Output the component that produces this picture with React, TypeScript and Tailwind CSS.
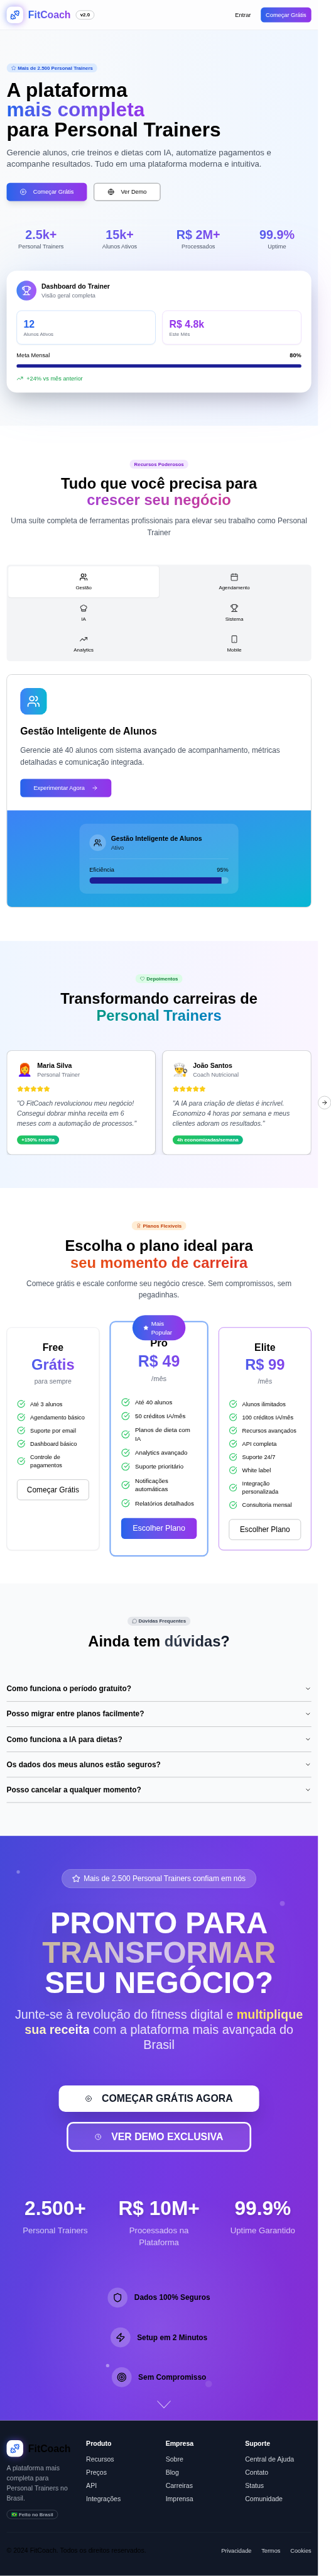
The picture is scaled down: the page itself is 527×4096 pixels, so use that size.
import React from "react";
import {
  ArrowRight,
  Award,
  Calendar,
  ChefHat,
  ChevronDown,
  CirclePlay,
  CircleCheckBig,
  Clock,
  Dumbbell,
  Globe,
  Heart,
  MessageCircle,
  Shield,
  Smartphone,
  Star,
  Target,
  TrendingUp,
  Trophy,
  Users,
  Zap,
} from "lucide-react";

const brand = "bg-gradient-to-r from-[#2563eb] to-[#9333ea]";
const brandText = brand + " bg-clip-text text-transparent";

function Badge({ className, children }: { className: string; children: React.ReactNode }) {
  return (
    <span
      className={
        "inline-flex h-[22px] items-center whitespace-nowrap rounded-full border px-2.5 text-xs font-semibold " +
        className
      }
    >
      {children}
    </span>
  );
}

function Logo({ textClass, children }: { textClass: string; children?: React.ReactNode }) {
  return (
    <div className="flex h-10 items-center gap-3">
      <div className="relative size-10 shrink-0">
        <div className={"absolute inset-0 rounded-xl opacity-60 blur-[8px] " + brand} />
        <div className="relative flex size-10 items-center justify-center rounded-xl bg-white">
          <Dumbbell className="size-6 text-[#2563eb]" />
        </div>
      </div>
      <span className={"text-2xl font-bold " + textClass}>FitCoach</span>
      {children}
    </div>
  );
}

function Header() {
  return (
    <header className="flex h-[73px] items-center justify-between border-b border-[#e0e4ea] bg-[#fdfdfe] px-4">
      <Logo textClass={brandText}>
        <Badge className="border-[#b0b2b5] bg-white text-black">v2.0</Badge>
      </Logo>
      <div className="flex items-center gap-3 text-sm">
        <span className="px-3">Entrar</span>
        <span className={"flex h-9 items-center whitespace-nowrap rounded-lg px-3 text-white " + brand}>Começar Grátis</span>
      </div>
    </header>
  );
}

const heroStats = [
  ["2.5k+", "Personal Trainers"],
  ["15k+", "Alunos Ativos"],
  ["R$ 2M+", "Processados"],
  ["99.9%", "Uptime"],
];

function Hero() {
  return (
    <section className="relative z-10 h-[954px] bg-gradient-to-r from-[#f9fafb] to-[#eff6ff] px-4 pt-20">
      <div className="flex">
        <Badge className="border-transparent bg-[#dbeafe] text-[#1d4ed8]">
          <Star className="mr-1 size-3" strokeWidth={1.5} />
          Mais de 2.500 Personal Trainers
        </Badge>
      </div>
      <h1 className="mt-[18px] whitespace-nowrap text-5xl font-bold leading-[48px]">
        A plataforma
        <br />
        <span className={brandText}>mais completa</span>
        <br />
        para Personal Trainers
      </h1>
      <p className="mt-4 whitespace-nowrap text-xl text-[#4b5563]">
        Gerencie alunos, crie treinos e dietas com IA, automatize pagamentos e
        <br />
        acompanhe resultados. Tudo em uma plataforma moderna e intuitiva.
      </p>
      <div className="mt-8 flex gap-4 text-sm">
        <div className={"flex h-11 items-center gap-4 whitespace-nowrap rounded-lg px-8 text-white shadow-lg " + brand}>
          <CirclePlay className="size-4" />
          Começar Grátis
        </div>
        <div className="flex h-11 items-center gap-4 whitespace-nowrap rounded-lg border-2 border-[#b0b2b4] bg-white px-8">
          <Globe className="size-4" />
          Ver Demo
        </div>
      </div>
      <div className="mt-16 grid grid-cols-4 gap-6 text-center">
        {heroStats.map(([value, label]) => (
          <div key={label}>
            <div className={"text-3xl font-bold " + brandText}>{value}</div>
            <div className="text-sm text-[#4b5563]">{label}</div>
          </div>
        ))}
      </div>
      <div className="relative mt-12">
        <div className="absolute inset-0 rounded-3xl bg-gradient-to-r from-[#60a5fa] to-[#c084fc] opacity-20 blur-[64px]" />
        <DashboardCard />
      </div>
    </section>
  );
}

function DashboardCard() {
  return (
    <div className="relative h-[294px] rounded-3xl bg-white p-6 shadow-2xl">
      <div className="flex items-center gap-3">
        <div className="flex size-12 items-center justify-center rounded-full bg-gradient-to-r from-[#3b82f6] to-[#a855f7]">
          <Trophy className="size-6 text-white" />
        </div>
        <div>
          <div className="font-semibold">Dashboard do Trainer</div>
          <div className="text-sm text-[#6b7280]">Visão geral completa</div>
        </div>
      </div>
      <div className="mt-6 grid grid-cols-2 gap-4">
        <div className="h-[82px] rounded-xl border border-[#bfdbfe] p-4 shadow-xs">
          <div className="text-2xl font-bold text-[#2563eb]">12</div>
          <div className="text-xs text-[#6b7280]">Alunos Ativos</div>
        </div>
        <div className="h-[82px] rounded-xl border border-[#e9d5ff] p-4 shadow-xs">
          <div className="text-2xl font-bold text-[#9333ea]">R$ 4.8k</div>
          <div className="text-xs text-[#6b7280]">Este Mês</div>
        </div>
      </div>
      <div className="mt-4 flex justify-between text-sm">
        <span>Meta Mensal</span>
        <span className="font-semibold">80%</span>
      </div>
      <div className="mt-3 h-2 rounded-full bg-[#1b1e95]" />
      <div className="mt-4 flex items-center gap-2 text-sm text-[#16a34a]">
        <TrendingUp className="size-4" />
        +24% vs mês anterior
      </div>
    </div>
  );
}

const tabs = [
  { label: "Gestão", Icon: Users },
  { label: "Agendamento", Icon: Calendar },
  { label: "IA", Icon: ChefHat },
  { label: "Sistema", Icon: Trophy },
  { label: "Analytics", Icon: TrendingUp },
  { label: "Mobile", Icon: Smartphone },
];

function Features() {
  return (
    <section className="h-[1243px] px-4 pt-[82px] text-center">
      <div className="flex justify-center">
        <Badge className="border-transparent bg-[#f3e8ff] text-[#7e22ce]">Recursos Poderosos</Badge>
      </div>
      <h2 className="mt-4 text-4xl font-bold leading-10">
        Tudo que você precisa para
        <span className="block bg-gradient-to-r from-[#9333ea] to-[#db2777] bg-clip-text text-transparent">
          crescer seu negócio
        </span>
      </h2>
      <p className="mt-4 whitespace-nowrap text-lg leading-7 text-[#4b5563]">
        Uma suíte completa de ferramentas profissionais para elevar seu trabalho como Personal
        <br />
        Trainer
      </p>
      <div className="mt-[63px] grid h-[233px] grid-cols-2 grid-rows-3 rounded-lg bg-[#f3f4f6] p-1">
        {tabs.map(({ label, Icon }, i) => (
          <div
            key={label}
            className={
              "flex flex-col items-center justify-center gap-2 text-xs " +
              (i === 0 ? "rounded-md bg-white shadow-xs" : "")
            }
          >
            <Icon className={i === 0 ? "size-5" : "size-5 text-[#3d3e40]"} />
            {label}
          </div>
        ))}
      </div>
      <div className="mt-8 h-[562px] overflow-hidden rounded-xl border border-[#b0b2b4] text-left">
        <div className="h-[327px] bg-white p-8">
          <div className="flex size-16 items-center justify-center rounded-2xl bg-gradient-to-r from-[#3b82f6] to-[#06b6d4]">
            <Users className="size-8 text-white" />
          </div>
          <h3 className="mt-6 text-2xl font-bold">Gestão Inteligente de Alunos</h3>
          <p className="mt-4 whitespace-nowrap text-lg leading-[29.25px] text-[#4b5563]">
            Gerencie até 40 alunos com sistema avançado de acompanhamento, métricas
            <br />
            detalhadas e comunicação integrada.
          </p>
          <div className={"mt-6 flex h-11 w-[220px] items-center gap-4 whitespace-nowrap rounded-lg px-8 text-sm text-white " + brand}>
            Experimentar Agora
            <ArrowRight className="size-4" />
          </div>
        </div>
        <div className="flex h-[233px] justify-center bg-gradient-to-br from-[#3b82f6] to-[#06b6d4] p-8">
          <div className="h-[169px] w-96 rounded-2xl bg-white/12 p-6">
            <div className="flex items-center gap-3">
              <div className="flex size-10 items-center justify-center rounded-full bg-white/20">
                <Users className="size-5" />
              </div>
              <div>
                <div className="font-semibold">Gestão Inteligente de Alunos</div>
                <div className="text-sm text-black/75">Ativo</div>
              </div>
            </div>
            <div className="mt-4 h-px bg-white/20" />
            <div className="mt-4 flex justify-between text-sm">
              <span>Eficiência</span>
              <span>95%</span>
            </div>
            <div className="mt-2 h-4 overflow-hidden rounded-full bg-white/20">
              <div className="h-4 w-[95%] bg-[#1b1e95]" />
            </div>
          </div>
        </div>
      </div>
    </section>
  );
}

const testimonials = [
  {
    emoji: "👩‍🦰",
    name: "Maria Silva",
    role: "Personal Trainer",
    lines: ['"O FitCoach revolucionou meu negócio!', "Consegui dobrar minha receita em 6", 'meses com a automação de processos."'],
    result: "+150% receita",
  },
  {
    emoji: "👨‍🍳",
    name: "João Santos",
    role: "Coach Nutricional",
    lines: ['"A IA para criação de dietas é incrível.', "Economizo 4 horas por semana e meus", 'clientes adoram os resultados."'],
    result: "4h economizadas/semana",
  },
];

function Testimonials() {
  return (
    <section className="relative h-[596px] bg-gradient-to-r from-[#eff6ff] to-[#faf5ff] px-4 pt-20">
      <div className="flex justify-center">
        <Badge className="border-transparent bg-[#dcfce7] text-[#15803d]">
          <Heart className="mr-1 size-3" strokeWidth={1.5} />
          Depoimentos
        </Badge>
      </div>
      <h2 className="mt-[18px] text-center text-4xl font-bold leading-10">
        Transformando carreiras de
        <span className="block bg-gradient-to-r from-[#16a34a] to-[#2563eb] bg-clip-text text-transparent">
          Personal Trainers
        </span>
      </h2>
      <div className="mt-16 grid grid-cols-2 gap-4 overflow-hidden">
        {testimonials.map((t) => (
          <div key={t.name} className="h-[252px] rounded-xl border border-[#b0b2b4] bg-white p-6 shadow-lg">
            <div className="flex items-center gap-3">
              <div className="w-[37px] whitespace-nowrap text-3xl">{t.emoji}</div>
              <div>
                <div className="font-semibold">{t.name}</div>
                <div className="text-sm text-[#6b7280]">{t.role}</div>
              </div>
            </div>
            <div className="mt-4 flex">
              {[0, 1, 2, 3, 4].map((n) => (
                <Star key={n} className="size-4 fill-[#facc15] text-[#facc15]" />
              ))}
            </div>
            <p className="mt-4 whitespace-nowrap italic text-[#4b5563]">
              {t.lines.map((line) => (
                <span key={line} className="block">
                  {line}
                </span>
              ))}
            </p>
            <div className="mt-4 flex">
              <Badge className="border-transparent bg-gradient-to-r from-[#22c55e] to-[#10b981] bg-origin-border text-white">
                {t.result}
              </Badge>
            </div>
          </div>
        ))}
      </div>
      <div className="absolute -right-8 top-[374px] flex size-8 items-center justify-center rounded-full border border-[#b0b2b4] bg-white">
        <ArrowRight className="size-4" />
      </div>
    </section>
  );
}

const plans = [
  {
    name: "Free",
    price: "Grátis",
    period: "para sempre",
    items: ["Até 3 alunos", "Agendamento básico", "Suporte por email", "Dashboard básico", "Controle de\npagamentos"],
    cta: "Começar Grátis",
    card: "border border-[#e5e7eb]",
    button: "h-[50px] border border-[#b0b2b4]",
  },
  {
    name: "Pro",
    price: "R$ 49",
    period: "/mês",
    items: [
      "Até 40 alunos",
      "50 créditos IA/mês",
      "Planos de dieta com\nIA",
      "Analytics avançado",
      "Suporte prioritário",
      "Notificações\nautomáticas",
      "Relatórios detalhados",
    ],
    cta: "Escolher Plano",
    card: "scale-105 border border-[#3b82f6] ring-2 ring-[#3b82f6]/50",
    button: "h-12 text-white bg-gradient-to-r from-[#2563eb] to-[#9333ea]",
  },
  {
    name: "Elite",
    price: "R$ 99",
    period: "/mês",
    items: [
      "Alunos ilimitados",
      "100 créditos IA/mês",
      "Recursos avançados",
      "API completa",
      "Suporte 24/7",
      "White label",
      "Integração\npersonalizada",
      "Consultoria mensal",
    ],
    cta: "Escolher Plano",
    card: "border border-[#a855f7]",
    button: "h-[50px] border border-[#b0b2b4]",
  },
];

function Pricing() {
  return (
    <section className="h-[954px] px-4 pt-20 text-center">
      <div className="flex justify-center">
        <Badge className="border-transparent bg-[#ffedd5] text-[#c2410c]">
          <Award className="mr-1 size-3" strokeWidth={1.5} />
          Planos Flexíveis
        </Badge>
      </div>
      <h2 className="mt-[18px] text-4xl font-bold leading-10">
        Escolha o plano ideal para
        <span className="block bg-gradient-to-r from-[#ea580c] to-[#dc2626] bg-clip-text text-transparent">
          seu momento de carreira
        </span>
      </h2>
      <p className="mt-4 whitespace-nowrap text-lg leading-7 text-[#4b5563]">
        Comece grátis e escale conforme seu negócio cresce. Sem compromissos, sem
        <br />
        pegadinhas.
      </p>
      <div className="mt-16 grid h-[538px] grid-cols-3 gap-8">
        {plans.map((plan) => (
          <div key={plan.name} className={"relative rounded-xl bg-white px-6 pt-8 shadow-xs " + plan.card}>
            <div className="text-2xl font-bold">{plan.name}</div>
            <div className={"mt-1.5 text-4xl font-bold leading-10 " + brandText}>{plan.price}</div>
            <div className="mt-2 text-[#6b7280]">{plan.period}</div>
            <div className="mt-8 flex flex-col gap-3 text-left text-sm">
              {plan.items.map((item) => (
                <div key={item} className="flex items-center gap-3">
                  <CircleCheckBig className="size-5 shrink-0 text-[#22c55e]" />
                  <span className="whitespace-pre">{item}</span>
                </div>
              ))}
            </div>
            <div className={"mt-6 flex items-center justify-center whitespace-nowrap rounded-lg text-lg " + plan.button}>
              {plan.cta}
            </div>
            {plan.name === "Pro" && (
              <div
                className={
                  "absolute -top-4 left-1/2 flex h-[58px] w-[122px] -translate-x-1/2 items-center gap-1.5 rounded-full pl-[25px] text-left text-sm text-white " +
                  brand
                }
              >
                <Star className="size-3 fill-white" />
                <span>
                  Mais
                  <br />
                  Popular
                </span>
              </div>
            )}
          </div>
        ))}
      </div>
    </section>
  );
}

const questions = [
  "Como funciona o período gratuito?",
  "Posso migrar entre planos facilmente?",
  "Como funciona a IA para dietas?",
  "Os dados dos meus alunos estão seguros?",
  "Posso cancelar a qualquer momento?",
];

function Faq() {
  return (
    <section className="h-[609px] bg-[#f9fafb] px-4 pt-20">
      <div className="flex justify-center">
        <Badge className="border-transparent bg-[#e5e7eb] text-[#374151]">
          <MessageCircle className="mr-1 size-3" strokeWidth={1.5} />
          Dúvidas Frequentes
        </Badge>
      </div>
      <h2 className="mt-[18px] text-center text-4xl font-bold leading-10">
        Ainda tem{" "}
        <span className="bg-gradient-to-r from-[#374151] to-[#111827] bg-clip-text text-transparent">dúvidas?</span>
      </h2>
      <div className="mt-16">
        {questions.map((q) => (
          <div key={q} className="flex h-[61px] items-center justify-between border-b border-[#b0b2b4] text-lg font-semibold">
            {q}
            <ChevronDown className="size-4" />
          </div>
        ))}
      </div>
    </section>
  );
}

const ctaStats = [
  ["2.500+", "Personal Trainers"],
  ["R$ 10M+", "Processados na Plataforma"],
  ["99.9%", "Uptime Garantido"],
];

const trust = [
  { label: "Dados 100% Seguros", Icon: Shield },
  { label: "Setup em 2 Minutos", Icon: Zap },
  { label: "Sem Compromisso", Icon: Target },
];

function Cta() {
  return (
    <section className="relative h-[1410px] bg-[radial-gradient(circle_at_50%_22%,rgba(255,255,255,0.09),transparent_360px),radial-gradient(circle_at_50%_84%,rgba(255,255,255,0.12),transparent_330px),linear-gradient(105deg,#4648d8_0%,#7439e4_55%,#862cd2_100%)] px-4 pt-20 text-center">
      <div className="absolute left-10 top-[83px] size-2 rounded-full bg-white/30" />
      <div className="absolute left-[676px] top-[157px] size-3 rounded-full bg-white/20" />
      <div className="absolute left-[256px] top-[1274px] size-2 rounded-full bg-white/40" />
      <div className="absolute left-[496px] top-[1314px] size-4 rounded-full bg-white/10" />
      <div className="mx-auto flex h-[46px] w-[470px] items-center gap-2 whitespace-nowrap rounded-full border border-white/25 bg-white/20 pl-6 text-lg text-white">
        <Star className="size-5" />
        Mais de 2.500 Personal Trainers confiam em nós
      </div>
      <h2 className="mt-12 whitespace-nowrap text-7xl font-black leading-[72px] text-white drop-shadow-2xl">
        PRONTO PARA
        <span className="block bg-gradient-to-r from-[#fde047] via-white to-[#fcd34d] bg-clip-text text-transparent opacity-70">
          TRANSFORMAR
        </span>
        SEU NEGÓCIO?
      </h2>
      <p className="mt-6 whitespace-nowrap text-3xl leading-9 text-white/85">
        Junte-se à revolução do fitness digital e{" "}
        <span className="bg-gradient-to-r from-[#fde047] to-white bg-clip-text font-bold text-transparent">
          multiplique
          <br />
          sua receita
        </span>{" "}
        com a plataforma mais avançada do
        <br />
        Brasil
      </p>
      <div className="mt-20 flex flex-col items-center gap-6 text-2xl font-bold">
        <div className="flex h-16 items-center gap-6 whitespace-nowrap rounded-2xl bg-white px-16 text-[#111827] shadow-2xl">
          <CirclePlay className="size-4" />
          COMEÇAR GRÁTIS AGORA
        </div>
        <div className="flex h-[72px] items-center gap-6 whitespace-nowrap rounded-2xl border-4 border-white bg-white/10 px-16 text-white">
          <Clock className="size-4" />
          VER DEMO EXCLUSIVA
        </div>
      </div>
      <div className="mt-28 grid grid-cols-3 gap-12 px-4">
        {ctaStats.map(([value, label]) => (
          <div key={label}>
            <div className="whitespace-nowrap text-5xl font-black leading-none text-white drop-shadow-lg">{value}</div>
            <div className="mt-4 text-xl text-white/70">{label}</div>
          </div>
        ))}
      </div>
      <div className="mt-24 flex flex-col items-center gap-12">
        {trust.map(({ label, Icon }) => (
          <div key={label} className="flex items-center gap-4 text-lg font-semibold">
            <div className="flex size-12 items-center justify-center rounded-full bg-white/20">
              <Icon className="size-6" />
            </div>
            {label}
          </div>
        ))}
      </div>
      <svg
        className="absolute left-[379px] top-[1362px] text-white/70"
        width="34"
        height="20"
        viewBox="0 0 34 20"
        fill="none"
        stroke="currentColor"
        strokeWidth="1.6"
      >
        <path d="M1 1l16 17L33 1" />
      </svg>
    </section>
  );
}

const footerColumns = [
  { title: "Produto", links: ["Recursos", "Preços", "API", "Integrações"] },
  { title: "Empresa", links: ["Sobre", "Blog", "Carreiras", "Imprensa"] },
  { title: "Suporte", links: ["Central de Ajuda", "Contato", "Status", "Comunidade"] },
];

function Footer() {
  return (
    <footer className="h-[375px] bg-[#111827] px-4 pt-12">
      <div className="grid h-[190px] grid-cols-4 gap-8">
        <div>
          <Logo textClass="text-black" />
          <p className="mt-4 whitespace-nowrap text-[#9ca3af]">
            A plataforma mais
            <br />
            completa para
            <br />
            Personal Trainers no
            <br />
            Brasil.
          </p>
          <div className="mt-4 flex">
            <Badge className="border-[#4b5563] text-[#9ca3af]">🇧🇷 Feito no Brasil</Badge>
          </div>
        </div>
        {footerColumns.map((column) => (
          <div key={column.title}>
            <div className="font-semibold leading-[18px] text-white">{column.title}</div>
            <div className="mt-4 flex flex-col gap-2 text-[#d1d5db]">
              {column.links.map((link) => (
                <span key={link}>{link}</span>
              ))}
            </div>
          </div>
        ))}
      </div>
      <div className="mt-8 flex items-center justify-between border-t border-[#1f2937] pt-8">
        <span>© 2024 FitCoach. Todos os direitos reservados.</span>
        <div className="flex gap-6 text-sm text-[#d1d5db]">
          <span>Privacidade</span>
          <span>Termos</span>
          <span>Cookies</span>
        </div>
      </div>
    </footer>
  );
}

export default function App() {
  return (
    <div className="h-[4096px] w-[527px] overflow-hidden bg-white">
      <div className="h-[6214px] w-[800px] origin-top-left scale-[0.6591] overflow-hidden bg-white font-['Liberation_Sans',Arial,sans-serif] text-black">
        <div className="w-[768px]">
          <Header />
          <Hero />
          <Features />
          <Testimonials />
          <Pricing />
          <Faq />
          <Cta />
          <Footer />
        </div>
      </div>
    </div>
  );
}
